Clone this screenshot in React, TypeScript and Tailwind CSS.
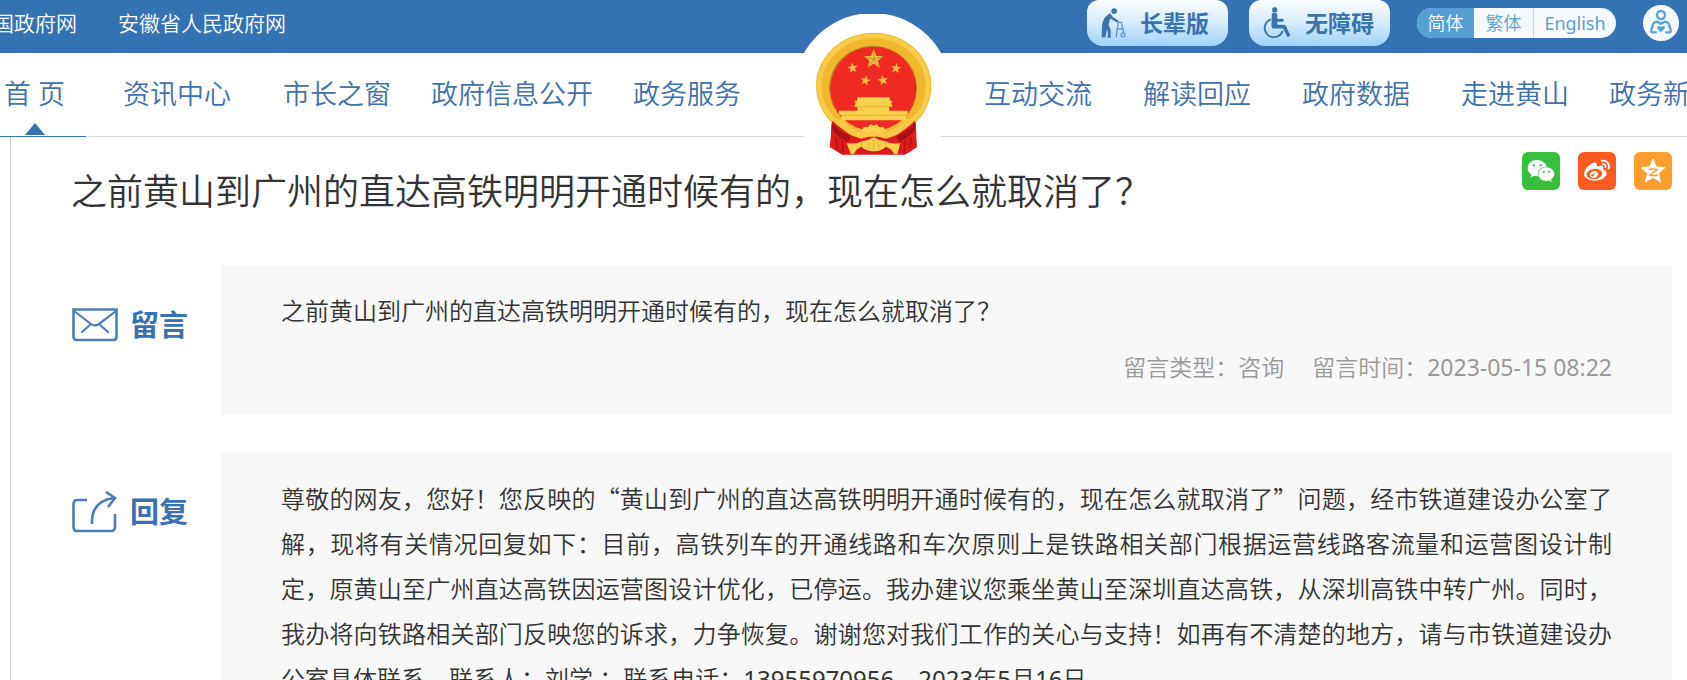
import type { ReactNode } from "react";
import { FaWeibo, FaWeixin } from "react-icons/fa";

const question = "之前黄山到广州的直达高铁明明开通时候有的，现在怎么就取消了？";

const STAR = "M0-10 2.4-3.2 9.5-3.1 3.8 1.3 5.9 8.1 0 4-5.9 8.1-3.8 1.3-9.5-3.1-2.4-3.2Z";

function Emblem() {
  return (
    <svg viewBox="72 42 411 435" className="block h-[145px] w-[137px]" role="img" aria-label="国徽">
      <path d="M72 158A237 237 0 0 1 483 158V477H72Z" fill="#fff" />
      <ellipse cx="281" cy="258" rx="173" ry="160" fill="#f1b72d" />
      <ellipse cx="281" cy="258" rx="163" ry="150" fill="none" stroke="#f8cb48" strokeWidth="14" />
      <ellipse cx="279" cy="264" rx="132" ry="127" fill="#b98a20" />
      <ellipse cx="280" cy="266" rx="129" ry="126" fill="#ee2a22" />
      <g fill="#efc043">
        <path d={STAR} transform="translate(281 178) scale(3.2)" />
        <path d={STAR} transform="translate(218 204) rotate(-8) scale(1.65)" />
        <path d={STAR} transform="translate(348 205) rotate(8) scale(1.65)" />
        <path d={STAR} transform="translate(256 242) rotate(12) scale(1.65)" />
        <path d={STAR} transform="translate(309 241) rotate(-10) scale(1.65)" />
      </g>
      <path d="M281 148V178L309 169M281 178 298 202M281 178 264 202M281 178 252 169" stroke="#a87a1b" strokeWidth="2" fill="none" />
      <path d="M232 292H328L330 302H336L334 310 338 320H328V332H383V343L378 345V361H184V345L177 343V332H232V320H222L227 310 224 302H231Z" fill="#fbd24d" />
      <path d="M230 320H330M184 346H378" stroke="#e3a02a" strokeWidth="2" />
      <path d="M158 362Q204 412 281 410 358 412 404 362L408 372Q408 410 411 441L390 455 374 464H186L172 455 149 441Q154 404 154 372Z" fill="#dd1b1c" />
      <path d="M156 370Q182 398 212 408L204 426Q176 412 158 392ZM406 370Q380 398 350 408L358 426Q386 412 404 392Z" fill="#a90f14" />
      <path d="M168 412 172 446M186 420 190 458M394 412 390 446M376 420 372 458" stroke="#b51015" strokeWidth="4" fill="none" />
      <path d="M160 352Q176 356 188 362 222 396 262 400L281 396 300 400Q340 396 374 362 386 356 402 352 374 404 318 416L281 406 244 416Q188 404 160 352Z" fill="#f9c945" />
      <path d="M244 394 252 380 264 382 272 372 281 377 290 372 298 382 310 380 318 394 300 400 281 396 262 400Z" fill="#fbd24d" />
      <path d="M200 429Q228 434 246 424L264 420 281 412 298 420 316 424Q334 434 361 429L352 462H342Q336 446 318 440 306 452 281 454 256 452 244 440 228 446 222 462H212Z" fill="#fbd24d" />
      <path d="M264 446 270 426M281 450V420M298 446 292 426M246 424 244 440M316 424 318 440" stroke="#dc9c26" strokeWidth="2" />
    </svg>
  );
}

function ElderIcon() {
  return (
    <svg viewBox="124 20 76 96" className="h-8 w-[25px]" aria-hidden="true">
      <circle cx="164" cy="32" r="8.5" fill="#3a74ad" />
      <path d="M152 38Q130 48 127 76L126 112H137L142 88 145 96 144 113H154L153 88 147 74 152 54 174 67 178 62 160 50Z" fill="#3a74ad" />
      <path d="M176 66H186L193 98M176 68 170 111M173 86H190" stroke="#5b94cb" strokeWidth="4" fill="none" />
      <circle cx="191" cy="104" r="6" fill="none" stroke="#5b94cb" strokeWidth="4" />
    </svg>
  );
}

function WheelchairIcon() {
  return (
    <svg viewBox="610 20 84 98" className="h-8 w-7" aria-hidden="true">
      <circle cx="645" cy="29" r="8" fill="#3a74ad" />
      <path d="M636 41Q645 34 653 42V56H672V65H653V74H674Q681 76 684 88L693 108 684 112 670 86H640Q635 84 635 78Z" fill="#3a74ad" />
      <path d="M633 58A28 28 0 1 0 669 93" fill="none" stroke="#3a74ad" strokeWidth="6" />
    </svg>
  );
}

function CareIcon() {
  return (
    <svg viewBox="729 15 108 108" className="h-9 w-9" aria-hidden="true">
      <circle cx="783" cy="69" r="54" fill="#f4f9fe" />
      <g fill="none" stroke="#5ba3d6" strokeWidth="7">
        <circle cx="783" cy="45" r="12" />
        <path d="M757 84Q757 67 771 65L783 71 795 65Q809 67 809 84" />
        <path d="M757 79Q751 94 756 97H770M809 79Q815 94 810 97H796" />
      </g>
      <path d="M783 97 772 86Q770 78 777 78 781 78 783 82 785 78 789 78 796 78 794 86Z" fill="#5ba3d6" />
    </svg>
  );
}

function EnvelopeIcon() {
  return (
    <svg viewBox="0 0 46 34" className="h-[34px] w-[46px]" fill="none" stroke="#4a7ebb" strokeWidth="2.6" aria-hidden="true">
      <path d="M1.5 1.5H44.5V29Q44.5 32 41 32H5Q1.5 32 1.5 29Z" />
      <path d="M2 3 19 16Q23 19 27 16L44 3M19 16 10 24M27 16 36 24" strokeWidth="2.2" strokeLinejoin="round" strokeLinecap="round" />
    </svg>
  );
}

function ReplyIcon() {
  return (
    <svg viewBox="0 0 46 42" className="h-[42px] w-[46px]" fill="none" stroke="#4a7ebb" strokeWidth="2.6" aria-hidden="true">
      <path d="M15 9H5Q1.5 9 1.5 13V36Q1.5 40 5 40H39Q43 40 43 36V23" />
      <path d="M20 33Q19 10 42 7M34 1 43 7 36 16" />
    </svg>
  );
}

function Qzone() {
  return (
    <svg viewBox="0 0 38 38" className="h-[38px] w-[38px]" aria-hidden="true">
      <path d="M19 7 22.3 15 31 15.6 24.5 21.3 26.6 30 19 25.4 11.4 30 13.5 21.3 7 15.6 15.7 15Z" fill="#fff" stroke="#fff" strokeLinejoin="round" />
      <path d="M14.5 17.5Q19 16.5 23 17.5L16 23.2Q20 24 24 23" stroke="#ff9e2c" strokeWidth="1.5" fill="none" />
    </svg>
  );
}

function ModeButton({ icon, label }: { icon: ReactNode; label: string }) {
  return (
    <button className="flex h-[46px] w-[141px] items-center gap-[14px] rounded-b-2xl rounded-t-xl bg-linear-to-b from-[#fbfdff] via-[#d5ecfd] to-[#9dd3fd] pl-[14px] text-[23px] font-bold text-[#3a74ad]">
      {icon}
      {label}
    </button>
  );
}

function NavLink({ label }: { label: string }) {
  return (
    <a href="#" className="shrink-0">
      {label}
    </a>
  );
}

function Row({ icon, label, children }: { icon: ReactNode; label: string; children: ReactNode }) {
  return (
    <section className="flex">
      <h2 className="flex h-[120px] w-[150px] shrink-0 items-center gap-3 pl-px text-[29px] font-bold whitespace-nowrap text-[#3a72b0]">
        {icon}
        {label}
      </h2>
      <div className="min-w-0 flex-1 bg-[#f8f8f8] px-[60px] pt-[23px] pb-[25px] text-2xl/[45px] text-[#333]">
        {children}
      </div>
    </section>
  );
}

export default function App() {
  return (
    <div
      lang="zh-CN"
      className="h-screen overflow-hidden bg-white font-['Noto_Sans','Noto_Sans_CJK_SC',sans-serif] font-[350]"
    >
      <header>
        <div className="flex h-[53px] items-start justify-between border-b-2 border-[#3d6c9f] bg-[#3572b4] pr-2">
          <div className="-ml-[7px] flex h-12 items-center gap-[41px] text-[21px] text-white">
            <a href="#">国政府网</a>
            <a href="#">安徽省人民政府网</a>
          </div>
          <div className="flex h-[46px] items-center">
            <div className="flex gap-[21px]">
              <ModeButton icon={<ElderIcon />} label="长辈版" />
              <ModeButton icon={<WheelchairIcon />} label="无障碍" />
            </div>
            <div className="mx-[27px] flex h-[30px] overflow-hidden rounded-full bg-[#f5fafe] text-lg/[30px] text-[#5f9fd0]">
              <button className="w-[57px] bg-[#559fd3] text-white">简体</button>
              <button className="w-[59px]">繁体</button>
              <button className="w-[83px] border-l border-[#c5dcf0] font-normal">English</button>
            </div>
            <button aria-label="关怀服务">
              <CareIcon />
            </button>
          </div>
        </div>
        <nav className="flex h-[84px] items-center border-b border-[#d9d9d9] text-[27px] whitespace-nowrap text-[#3f71ac]">
          <a href="#" className="relative flex h-[84px] w-[86px] shrink-0 items-center border-b border-[#3572b4] pl-1">
            首 页
            <svg viewBox="0 0 20 12" className="absolute bottom-px left-[25px] h-3 w-5" aria-hidden="true">
              <path d="M10 0 20 12H0Z" fill="#3572b4" />
            </svg>
          </a>
          <div className="flex shrink-0 gap-[52px] pl-[37px]">
            <NavLink label="资讯中心" />
            <NavLink label="市长之窗" />
          </div>
          <div className="flex shrink-0 gap-10 pl-10">
            <NavLink label="政府信息公开" />
            <NavLink label="政务服务" />
          </div>
          <div className="relative z-10 mr-[43px] ml-[63px] h-[84px] w-[137px] shrink-0">
            <div className="absolute -top-[39px] left-0">
              <Emblem />
            </div>
          </div>
          <div className="flex shrink-0 gap-[51px]">
            <NavLink label="互动交流" />
            <NavLink label="解读回应" />
            <NavLink label="政府数据" />
            <NavLink label="走进黄山" />
          </div>
          <div className="min-w-0 flex-1 overflow-hidden pl-10">
            <NavLink label="政务新" />
          </div>
        </nav>
      </header>
      <main className="ml-[10px] min-h-screen border-l border-[#ccc] pr-[15px] pl-[60px]">
        <div className="flex h-32 items-start justify-between pt-[15px]">
          <h1 className="text-4xl/[80px] text-[#333]">{question}</h1>
          <div className="flex gap-[18px]">
            <button aria-label="微信" className="flex h-[38px] w-[38px] items-center justify-center rounded-md bg-[#38bf3e] text-[28px] text-white">
              <FaWeixin />
            </button>
            <button aria-label="微博" className="flex h-[38px] w-[38px] items-center justify-center rounded-md bg-[#fb5a20] text-[26px] text-white">
              <FaWeibo />
            </button>
            <button aria-label="QQ空间" className="h-[38px] w-[38px] rounded-md bg-[#ff9e2c]">
              <Qzone />
            </button>
          </div>
        </div>
        <div className="flex flex-col gap-[37px]">
          <Row icon={<EnvelopeIcon />} label="留言">
            <p>{question}</p>
            <p className="mt-3 flex h-[45px] items-center justify-end gap-7 text-[23px]/[45px] text-[#999]">
              <span>留言类型：咨询</span>
              <span>
                留言时间：<time className="font-normal">2023-05-15 08:22</time>
              </span>
            </p>
          </Row>
          <Row icon={<ReplyIcon />} label="回复">
            <p className="text-justify">
              尊敬的网友，您好！您反映的<span className="font-['Noto_Sans_CJK_SC',sans-serif]">“</span>
              黄山到广州的直达高铁明明开通时候有的，现在怎么就取消了
              <span className="font-['Noto_Sans_CJK_SC',sans-serif]">”</span>
              问题，经市铁道建设办公室了解，现将有关情况回复如下：目前，高铁列车的开通线路和车次原则上是铁路相关部门根据运营线路客流量和运营图设计制定，原黄山至广州直达高铁因运营图设计优化，已停运。我办建议您乘坐黄山至深圳直达高铁，从深圳高铁中转广州。同时，我办将向铁路相关部门反映您的诉求，力争恢复。谢谢您对我们工作的关心与支持！如再有不清楚的地方，请与市铁道建设办公室具体联系。联系人：刘学
              ；联系电话：<span className="font-normal">13955970956</span>。
              <span className="font-normal">2023</span>年<span className="font-normal">5</span>月
              <span className="font-normal">16</span>日
            </p>
          </Row>
        </div>
      </main>
    </div>
  );
}
